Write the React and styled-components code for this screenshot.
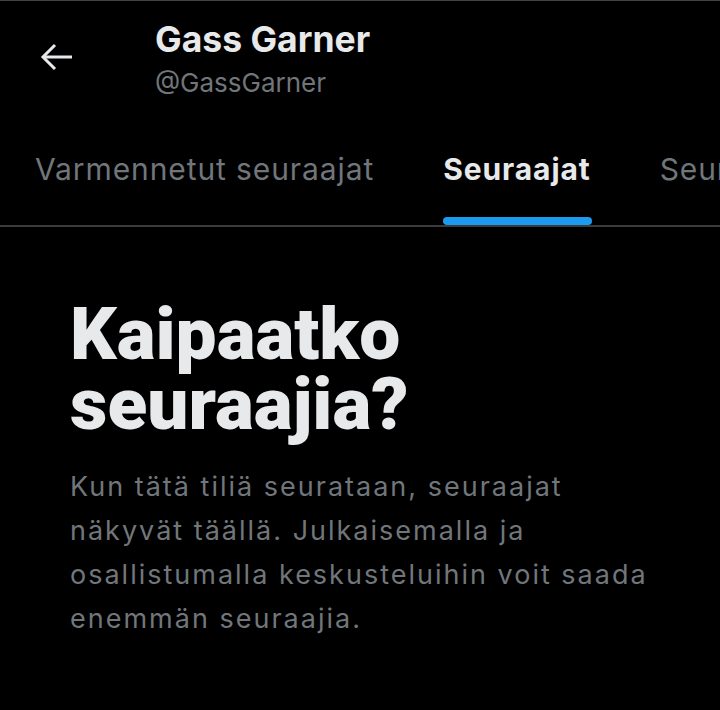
import React from "react";
import styled, { createGlobalStyle } from "styled-components";

const Global = createGlobalStyle`
  html, body { margin: 0; padding: 0; background: #000; }
  body { font-family: Inter, Roboto, sans-serif; -webkit-font-smoothing: antialiased; }
  * { box-sizing: border-box; }
`;

const Page = styled.div`
  width: 720px;
  height: 710px;
  background: #000;
  border-top: 1px solid #454141;
  overflow: hidden;
  display: flex;
  flex-direction: column;
`;

const Header = styled.header`
  display: flex;
  align-items: flex-start;
  height: 127px;
  padding: 19px 0 0 40px;
`;

const BackButton = styled.button`
  width: 34px;
  height: 30px;
  margin-top: 22px;
  padding: 0;
  border: 0;
  background: transparent;
  color: #e7e9ea;
  display: flex;
  align-items: center;
  justify-content: center;
`;

const TitleBlock = styled.div`
  display: flex;
  flex-direction: column;
  margin-left: 81px;
`;

const Name = styled.div`
  font-family: Inter, sans-serif;
  font-weight: 700;
  font-size: 35.5px;
  line-height: 40px;
  color: #e7e9ea;
`;

const Handle = styled.div`
  font-family: Inter, sans-serif;
  font-size: 26px;
  line-height: 30px;
  color: #71767b;
  margin-top: 8px;
`;

const Tabs = styled.nav`
  display: flex;
  border-bottom: 2px solid #393c3f;
  white-space: nowrap;
  padding-left: 1px;
  overflow: hidden;
`;

const Tab = styled.div`
  position: relative;
  flex: none;
  padding: 23px 35px 0 34px;
  height: 97px;
  display: flex;
  align-items: flex-start;
  font-family: Inter, sans-serif;
  font-size: 30px;
  line-height: 36px;
  letter-spacing: 0.9px;
  font-weight: ${(p) => (p.$active ? 700 : 400)};
  color: ${(p) => (p.$active ? "#e7e9ea" : "#71767b")};
`;

const Indicator = styled.span`
  position: absolute;
  left: 34px;
  right: 34px;
  bottom: 0;
  height: 8px;
  border-radius: 4px;
  background: #1d9bf0;
`;

const Empty = styled.section`
  padding: 72px 40px 0 70px;
`;

const Heading = styled.h1`
  margin: 0;
  font-family: Roboto, sans-serif;
  font-weight: 900;
  font-size: 73px;
  line-height: 70px;
  color: #e7e9ea;
  width: 480px;
`;

const Body = styled.p`
  margin: 26px 0 0;
  font-family: Inter, sans-serif;
  font-size: 27px;
  line-height: 44px;
  letter-spacing: 2px;
  color: #71767b;
  white-space: nowrap;
`;

export default function App() {
  return (
    <>
      <Global />
      <Page>
        <Header>
          <BackButton aria-label="Takaisin">
            <svg width="34" height="28" viewBox="0 0 34 28" fill="none" stroke="currentColor" strokeWidth="3">
              <path d="M32 14H4" />
              <path d="M15 2L3 14l12 12" />
            </svg>
          </BackButton>
          <TitleBlock>
            <Name>Gass Garner</Name>
            <Handle>@GassGarner</Handle>
          </TitleBlock>
        </Header>
        <Tabs>
          <Tab>Varmennetut seuraajat</Tab>
          <Tab $active>
            Seuraajat
            <Indicator />
          </Tab>
          <Tab>Seuraa</Tab>
        </Tabs>
        <Empty>
          <Heading>Kaipaatko seuraajia?</Heading>
          <Body>
            Kun tätä tiliä seurataan, seuraajat
            <br />
            näkyvät täällä. Julkaisemalla ja
            <br />
            osallistumalla keskusteluihin voit saada
            <br />
            enemmän seuraajia.
          </Body>
        </Empty>
      </Page>
    </>
  );
}
